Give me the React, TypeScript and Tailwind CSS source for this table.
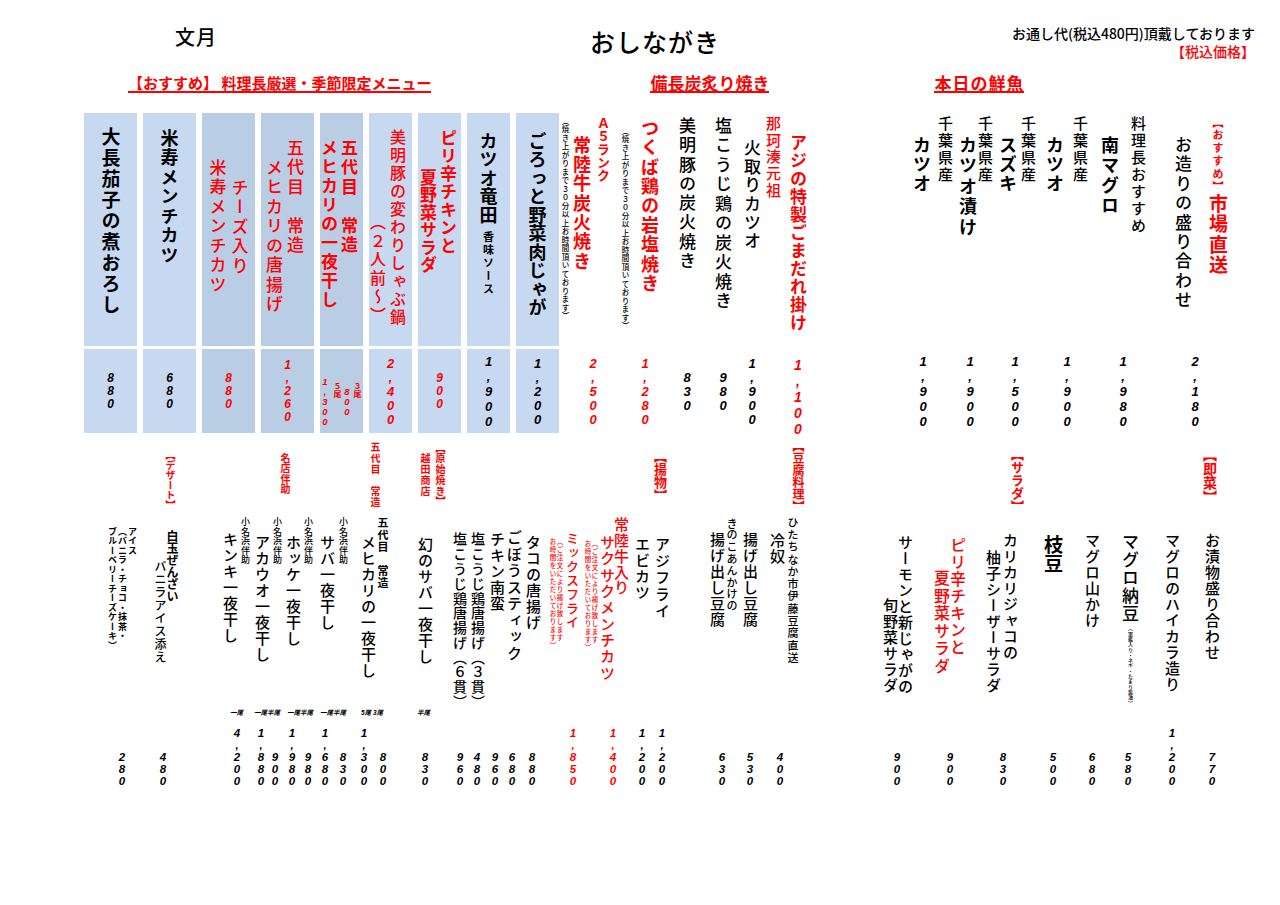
import type { ReactNode } from "react";

const RED = "text-[#ff0000]";
const BOX_LIGHT = "bg-[#c6d9f1]";
const BOX_DARK = "bg-[#b9cde5]";

function VLine({ children, className = "" }: { children: ReactNode; className?: string }) {
  return (
    <div className={`shrink-0 whitespace-nowrap [writing-mode:vertical-rl] ${className}`}>
      {children}
    </div>
  );
}

type PriceProps = {
  v: string;
  red?: boolean;
  cell?: string;
  w?: string;
  size?: string;
  className?: string;
};

// prices are stacked digit by digit, like the printed menu
function Price({ v, red = false, cell = "h-[14px]", w = "w-[14px]", size = "text-[13px]", className = "" }: PriceProps) {
  return (
    <div
      className={`flex shrink-0 flex-col items-center font-['Liberation_Sans',sans-serif] font-bold italic leading-none ${w} ${size} ${
        red ? "text-[#ff0000]" : "text-black"
      } ${className}`}
    >
      {v.split("").map((ch, i) => (
        <span key={i} className={`flex items-center justify-center ${cell}`}>
          {ch}
        </span>
      ))}
    </div>
  );
}

function BoxCol({
  w,
  bg,
  layout = "justify-center",
  price,
  children,
}: {
  w: string;
  bg: string;
  layout?: string;
  price: ReactNode;
  children: ReactNode;
}) {
  return (
    <div className={`flex shrink-0 flex-col gap-[3px] ${w}`}>
      <div className={`flex h-[233px] items-start ${layout} ${bg}`}>{children}</div>
      <div className={`flex h-[84px] items-center justify-center ${bg}`}>{price}</div>
    </div>
  );
}

const small = { cell: "h-[13px]", size: "text-[12px]" };

function TopSection() {
  return (
    <div className="flex h-[320px] items-start">
      {/* recommended boxes */}
      <div className="ml-[84px] flex shrink-0 gap-[6px]">
        <BoxCol w="w-[53px]" bg={BOX_LIGHT} price={<Price v="880" {...small} />}>
          <VLine className="mt-[14px] text-[19px] font-bold leading-[20px] tracking-[2px]">大長茄子の煮おろし</VLine>
        </BoxCol>
        <BoxCol w="w-[53px]" bg={BOX_LIGHT} price={<Price v="680" {...small} />}>
          <VLine className="mt-[16px] text-[18px] font-bold leading-[20px] tracking-[1.5px]">米寿メンチカツ</VLine>
        </BoxCol>
        <BoxCol w="w-[53px]" bg={BOX_DARK} layout="justify-center gap-[6px]" price={<Price v="880" red {...small} />}>
          <VLine className={`mt-[46px] text-[17px] leading-[16px] tracking-[2.5px] ${RED}`}>米寿メンチカツ</VLine>
          <VLine className={`mt-[66px] text-[17px] leading-[16px] tracking-[2.5px] ${RED}`}>チーズ入り</VLine>
        </BoxCol>
        <BoxCol
          w="w-[53px]"
          bg={BOX_DARK}
          layout="justify-start gap-[5px] pl-[5px]"
          price={<Price v="1,260" red {...small} />}
        >
          <VLine className={`mt-[46px] text-[17px] leading-[16px] tracking-[2.5px] ${RED}`}>メヒカリの唐揚げ</VLine>
          <VLine className={`mt-[26px] text-[17px] leading-[16px] tracking-[2.5px] ${RED}`}>五代目　常造</VLine>
        </BoxCol>
        <div className="flex w-[43px] shrink-0 flex-col gap-[3px]">
          <div className={`flex h-[233px] items-start gap-[4px] pl-[1px] ${BOX_DARK}`}>
            <VLine className={`mt-[26px] text-[17px] font-bold leading-[16px] tracking-[2px] ${RED}`}>メヒカリの一夜干し</VLine>
            <VLine className={`mt-[26px] text-[17px] font-bold leading-[16px] tracking-[2.5px] ${RED}`}>五代目　常造</VLine>
          </div>
          <div className={`flex h-[84px] items-start pl-[1px] ${BOX_DARK} ${RED}`}>
            <Price v="1,300" red w="w-[8px]" cell="h-[10px]" size="text-[9.5px]" className="mt-[28px]" />
            <VLine className="ml-[4px] mt-[33px] text-[8px] font-bold leading-[8px]">５尾</VLine>
            <Price v="800" red w="w-[8px]" cell="h-[10px]" size="text-[9.5px]" className="ml-[2px] mt-[38px]" />
            <VLine className="ml-[2px] mt-[33px] text-[8px] font-bold leading-[8px]">３尾</VLine>
          </div>
        </div>
        <BoxCol
          w="w-[43px]"
          bg={BOX_LIGHT}
          layout="justify-start gap-[4px] pl-[1px]"
          price={<Price v="2,400" red />}
        >
          <VLine className={`mt-[101px] text-[16px] leading-[16px] tracking-[2.5px] ${RED}`}>（２人前～）</VLine>
          <VLine className={`mt-[16px] text-[16px] leading-[16px] tracking-[2px] ${RED}`}>美明豚の変わりしゃぶ鍋</VLine>
        </BoxCol>
        <BoxCol
          w="w-[43px]"
          bg={BOX_LIGHT}
          layout="justify-start gap-[4px] pl-[2px]"
          price={<Price v="900" red {...small} />}
        >
          <VLine className={`mt-[56px] text-[17px] font-bold leading-[16px] tracking-[0.5px] ${RED}`}>夏野菜サラダ</VLine>
          <VLine className={`mt-[16px] text-[17px] font-bold leading-[16px] tracking-[1px] ${RED}`}>ピリ辛チキンと</VLine>
        </BoxCol>
        <BoxCol w="w-[43px]" bg={BOX_LIGHT} price={<Price v="1,900" cell="h-[15px]" />}>
          <VLine className="mt-[19px] text-[18px] font-bold leading-[20px] tracking-[0.5px]">
            カツオ竜田
            <span className="ms-[6px] text-[11px] tracking-[2px]">香味ソース</span>
          </VLine>
        </BoxCol>
        <BoxCol w="w-[43px]" bg={BOX_LIGHT} price={<Price v="1,200" />}>
          <VLine className="mt-[19px] text-[18px] font-bold leading-[20px] tracking-[0.5px]">ごろっと野菜肉じゃが</VLine>
        </BoxCol>
      </div>

      {/* charcoal grill and fresh fish */}
      <div className="flex flex-col">
        <div className="flex h-[237px] items-start">
          <VLine className="ml-[2px] mt-[4px] text-[7.5px] leading-[8px] tracking-[1px]">
            （焼き上がりまで３０分以上お時間頂いております）
          </VLine>
          <VLine className={`ml-[5px] mt-[23px] text-[18px] font-bold leading-[16px] tracking-[1.3px] ${RED}`}>常陸牛炭火焼き</VLine>
          <VLine className={`ml-[5px] mt-[4px] text-[13px] font-bold leading-[16px] ${RED}`}>Ａ５ランク</VLine>
          <VLine className="ml-[10px] mt-[14px] text-[7.5px] leading-[8px] tracking-[1px]">
            （焼き上がりまで３０分以上お時間頂いております）
          </VLine>
          <VLine className={`ml-[13px] mt-[6px] text-[18px] font-bold leading-[16px] tracking-[1.4px] ${RED}`}>つくば鶏の岩塩焼き</VLine>
          <VLine className="ml-[21px] mt-[4px] text-[17px] leading-[16px] tracking-[2.3px]">美明豚の炭火焼き</VLine>
          <VLine className="ml-[20px] mt-[4px] text-[17px] leading-[16px] tracking-[2.5px]">塩こうじ鶏の炭火焼き</VLine>
          <VLine className="ml-[13px] mt-[26px] text-[17px] leading-[16px] tracking-[1.7px]">火取りカツオ</VLine>
          <VLine className={`ml-[5px] mt-[3px] text-[15px] leading-[16px] tracking-[1.6px] ${RED}`}>那珂湊元祖</VLine>
          <VLine className={`ml-[9px] mt-[21px] text-[17px] font-bold leading-[16px] tracking-[1px] ${RED}`}>アジの特製ごまだれ掛け</VLine>

          <VLine className="ml-[108px] mt-[23px] text-[18px] font-bold leading-[16px] tracking-[1px]">カツオ</VLine>
          <VLine className="ml-[7px] mt-[3px] text-[15px] leading-[16px] tracking-[2px]">千葉県産</VLine>
          <VLine className="ml-[7px] mt-[23px] text-[18px] font-bold leading-[16px] tracking-[2.5px]">カツオ漬け</VLine>
          <VLine className="ml-[1px] mt-[3px] text-[15px] leading-[16px] tracking-[2px]">千葉県産</VLine>
          <VLine className="ml-[7px] mt-[23px] text-[18px] font-bold leading-[16px] tracking-[1px]">スズキ</VLine>
          <VLine className="ml-[4px] mt-[3px] text-[15px] leading-[16px] tracking-[2px]">千葉県産</VLine>
          <VLine className="ml-[11px] mt-[23px] text-[18px] font-bold leading-[16px] tracking-[1px]">カツオ</VLine>
          <VLine className="ml-[9px] mt-[3px] text-[15px] leading-[16px] tracking-[2px]">千葉県産</VLine>
          <VLine className="ml-[14px] mt-[23px] text-[18px] font-bold leading-[16px] tracking-[2px]">南マグロ</VLine>
          <VLine className="ml-[12px] mt-[3px] text-[15px] leading-[16px] tracking-[2px]">料理長おすすめ</VLine>
          <VLine className="ml-[29px] mt-[23px] text-[17px] leading-[16px] tracking-[2.4px]">お造りの盛り合わせ</VLine>
          <VLine className={`ml-[19px] mt-[4px] text-[19px] font-bold leading-[16px] tracking-[1.5px] ${RED}`}>
            <span className="text-[11px] tracking-[1.8px]">【おすすめ】</span>
            市場直送
          </VLine>
        </div>
        <div className="flex h-[83px] items-center">
          <Price v="2,500" red className="ml-[27px]" />
          <Price v="1,280" red className="ml-[38px]" />
          <Price v="830" className="ml-[28px]" />
          <Price v="980" className="ml-[22px]" />
          <Price v="1,900" className="ml-[15px]" />
          <Price v="1,100" red cell="h-[16px]" size="text-[14px]" className="ml-[32px] mt-[10px]" />
          <Price v="1,900" cell="h-[15px]" className="ml-[111px]" />
          <Price v="1,900" cell="h-[15px]" className="ml-[33px]" />
          <Price v="1,500" cell="h-[15px]" className="ml-[31px]" />
          <Price v="1,900" cell="h-[15px]" className="ml-[38px]" />
          <Price v="1,980" cell="h-[15px]" className="ml-[42px]" />
          <Price v="2,180" cell="h-[15px]" className="ml-[58px]" />
        </div>
      </div>
    </div>
  );
}

function BottomSection() {
  const main = "text-[15px] leading-[16px] tracking-[1px]";
  const maker = "text-[9px] leading-[10px] tracking-[0.6px]";
  const bp = { cell: "h-[12px]", size: "text-[11.5px]" };

  return (
    <div className="flex flex-col">
      {/* category headings */}
      <div className={`flex h-[82px] items-start font-bold leading-[14px] ${RED}`}>
        <VLine className="ml-[163px] mt-[17px] text-[10px]">【デザート】</VLine>
        <VLine className="ml-[101px] mt-[20px] text-[10px] tracking-[0.5px]">名店伴助</VLine>
        <VLine className="ml-[76px] mt-[9px] text-[10px] tracking-[1px]">五代目　常造</VLine>
        <VLine className="ml-[36px] mt-[20px] text-[10px] tracking-[1px]">越田商店</VLine>
        <VLine className="ml-[1px] mt-[10px] text-[10px] tracking-[0.7px]">【原始焼き】</VLine>
        <VLine className="ml-[206px] mt-[17px] text-[13px]">【揚物】</VLine>
        <VLine className="ml-[124px] mt-[7px] text-[12px]">【豆腐料理】</VLine>
        <VLine className="ml-[205px] mt-[15px] text-[13px]">【サラダ】</VLine>
        <VLine className="ml-[179px] mt-[15px] text-[14px]">【即菜】</VLine>
      </div>

      {/* dish names */}
      <div className="flex h-[190px] items-start">
        <VLine className="ml-[107px] mt-[12px] text-[9px] font-bold leading-[10px] tracking-[0.5px]">
          アイス
          <br />
          （バニラ・チョコ・抹茶・
          <br />
          ブルーベリーチーズケーキ）
        </VLine>
        <VLine className="ml-[17px] mt-[45px] text-[12px] leading-[12px] tracking-[1px]">バニラアイス添え</VLine>
        <VLine className="ml-0 mt-[15px] text-[12px] font-bold leading-[12px]">白玉ぜんざい</VLine>

        <VLine className={`ml-[44px] mt-[17px] ${main}`}>キンキ一夜干し</VLine>
        <VLine className={`ml-[2px] mt-[2px] ${maker}`}>小名浜伴助</VLine>
        <VLine className={`ml-[4px] mt-[20px] ${main}`}>アカウオ一夜干し</VLine>
        <VLine className={`ml-[2px] mt-[2px] ${maker}`}>小名浜伴助</VLine>
        <VLine className={`ml-[3px] mt-[20px] ${main}`}>ホッケ一夜干し</VLine>
        <VLine className={`ml-[2px] mt-[2px] ${maker}`}>小名浜伴助</VLine>
        <VLine className={`ml-[6px] mt-[20px] ${main}`}>サバ一夜干し</VLine>
        <VLine className={`ml-[3px] mt-[2px] ${maker}`}>小名浜伴助</VLine>
        <VLine className={`ml-[12px] mt-[20px] ${main}`}>メヒカリの一夜干し</VLine>
        <VLine className="ml-[2px] mt-[2px] text-[11px] font-bold leading-[10px] tracking-[1px]">五代目　常造</VLine>
        <VLine className={`ml-[29px] mt-[22px] ${main}`}>幻のサバ一夜干し</VLine>

        <VLine className="ml-[19px] mt-[17px] text-[14px] leading-[16px] tracking-[0.8px]">塩こうじ鶏唐揚げ（６貫）</VLine>
        <VLine className="ml-[2px] mt-[17px] text-[14px] leading-[16px] tracking-[0.8px]">塩こうじ鶏唐揚げ（３貫）</VLine>
        <VLine className={`ml-[3px] mt-[17px] ${main}`}>チキン南蛮</VLine>
        <VLine className="ml-[1px] mt-[15px] text-[15px] leading-[16px] tracking-[1.5px]">ごぼうスティック</VLine>
        <VLine className={`ml-[3px] mt-[20px] ${main}`}>タコの唐揚げ</VLine>
        <VLine className={`ml-[8px] mt-[23px] text-[6.5px] leading-[7px] tracking-[1.5px] ${RED}`}>
          （ご注文により揚げ致します
          <br />
          お時間をいただいております）
        </VLine>
        <VLine className={`ml-[2px] mt-[17px] text-[13px] leading-[14px] tracking-[1px] ${RED}`}>ミックスフライ</VLine>
        <VLine className={`ml-[5px] mt-[25px] text-[6.5px] leading-[7px] tracking-[1.5px] ${RED}`}>
          （ご注文により揚げ致します
          <br />
          お時間をいただいております）
        </VLine>
        <VLine className={`ml-[2px] mt-[20px] text-[15px] leading-[14px] tracking-[1.3px] ${RED}`}>サクサクメンチカツ</VLine>
        <VLine className={`ml-0 mt-[2px] text-[15px] leading-[14px] tracking-[0.8px] ${RED}`}>常陸牛入り</VLine>
        <VLine className={`ml-[6px] mt-[22px] ${main}`}>エビカツ</VLine>
        <VLine className="ml-[4px] mt-[22px] text-[15px] leading-[16px] tracking-[1.6px]">アジフライ</VLine>

        <VLine className={`ml-[39px] mt-[17px] ${main}`}>揚げ出し豆腐</VLine>
        <VLine className="ml-[1px] mt-[3px] text-[11px] leading-[12px] tracking-[0.8px]">きのこあんかけの</VLine>
        <VLine className={`ml-[4px] mt-[17px] ${main}`}>揚げ出し豆腐</VLine>
        <VLine className={`ml-[11px] mt-[18px] ${main}`}>冷奴</VLine>
        <VLine className="ml-[2px] mt-[2px] text-[11px] leading-[12px] tracking-[1.3px]">ひたちなか市伊藤豆腐直送</VLine>

        <VLine className="ml-[84px] mt-[83px] text-[15px] leading-[14px] tracking-[1px]">旬野菜サラダ</VLine>
        <VLine className="ml-[1px] mt-[20px] text-[15px] leading-[14px] tracking-[1px]">サーモンと新じゃがの</VLine>
        <VLine className={`ml-[22px] mt-[55px] text-[16px] leading-[16px] tracking-[1.5px] ${RED}`}>夏野菜サラダ</VLine>
        <VLine className={`ml-0 mt-[22px] text-[16px] leading-[16px] tracking-[1px] ${RED}`}>ピリ辛チキンと</VLine>
        <VLine className={`ml-[19px] mt-[35px] ${main}`}>柚子シーザーサラダ</VLine>
        <VLine className={`ml-[1px] mt-[18px] ${main}`}>カリカリジャコの</VLine>
        <VLine className="ml-[25px] mt-[20px] text-[19px] font-bold leading-[20px]">枝豆</VLine>
        <VLine className={`ml-[21px] mt-[18px] ${main}`}>マグロ山かけ</VLine>
        <VLine className="ml-[22px] mt-[18px] text-[17px] leading-[16px] tracking-[1px]">
          マグロ納豆
          <span className="ms-[3px] text-[5px] tracking-[0.3px]">（軍艦入り・ネギ・たまり醤油）</span>
        </VLine>
        <VLine className={`ml-[26px] mt-[18px] ${main}`}>マグロのハイカラ造り</VLine>
        <VLine className={`ml-[24px] mt-[18px] ${main}`}>お漬物盛り合わせ</VLine>
      </div>

      {/* portion labels */}
      <div className="flex h-[17px] items-center whitespace-nowrap font-['Liberation_Sans','Noto_Sans_CJK_JP',sans-serif] text-[6.5px] font-bold italic leading-none">
        <span className="ml-[230px] w-[13px] shrink-0">一尾</span>
        <span className="ml-[11px] w-[26px] shrink-0">一尾半尾</span>
        <span className="ml-[7px] w-[26px] shrink-0">一尾半尾</span>
        <span className="ml-[7px] w-[26px] shrink-0">一尾半尾</span>
        <span className="ml-[15px] w-[24px] shrink-0">5尾 3尾</span>
        <span className="ml-[32px] w-[16px] shrink-0">半尾</span>
      </div>

      {/* prices */}
      <div className="flex h-[66px] items-end">
        <Price v="280" {...bp} className="ml-[115px]" />
        <Price v="480" {...bp} className="ml-[27px]" />
        <Price v="4,200" {...bp} className="ml-[60px]" />
        <Price v="1,880" {...bp} className="ml-[10px]" />
        <Price v="900" {...bp} className="ml-0" />
        <Price v="1,980" {...bp} className="ml-[3px]" />
        <Price v="980" {...bp} className="ml-[2px]" />
        <Price v="1,680" {...bp} className="ml-[3px]" />
        <Price v="830" {...bp} className="ml-[4px]" />
        <Price v="1,300" {...bp} className="ml-[7px]" />
        <Price v="800" {...bp} className="ml-[5px]" />
        <Price v="830" {...bp} className="ml-[28px]" />
        <Price v="960" {...bp} className="ml-[21px]" />
        <Price v="480" {...bp} className="ml-[3px]" />
        <Price v="960" {...bp} className="ml-[4px]" />
        <Price v="680" {...bp} className="ml-[3px]" />
        <Price v="880" {...bp} className="ml-[6px]" />
        <Price v="1,850" red {...bp} className="ml-[27px]" />
        <Price v="1,400" red {...bp} className="ml-[26px]" />
        <Price v="1,200" {...bp} className="ml-[15px]" />
        <Price v="1,200" {...bp} className="ml-[6px]" />
        <Price v="630" {...bp} className="ml-[46px]" />
        <Price v="530" {...bp} className="ml-[14px]" />
        <Price v="400" {...bp} className="ml-[16px]" />
        <Price v="900" {...bp} className="ml-[103px]" />
        <Price v="900" {...bp} className="ml-[39px]" />
        <Price v="830" {...bp} className="ml-[39px]" />
        <Price v="500" {...bp} className="ml-[36px]" />
        <Price v="680" {...bp} className="ml-[25px]" />
        <Price v="580" {...bp} className="ml-[22px]" />
        <Price v="1,200" {...bp} className="ml-[30px]" />
        <Price v="770" {...bp} className="ml-[26px]" />
      </div>
    </div>
  );
}

export default function App() {
  return (
    <div className="h-[905px] w-[1280px] overflow-hidden bg-white font-['Noto_Sans_CJK_JP',sans-serif] font-medium text-black">
      <header className="flex h-[70px] items-start pt-[24px]">
        <div className="ml-[175px] mt-[3px] text-[20px] leading-none tracking-[1px]">文月</div>
        <div className="ml-[373px] mt-[5px] text-[25px] leading-none tracking-[1px]">おしながき</div>
        <div className="ml-auto mr-[25px] flex flex-col items-end text-[14px] leading-[18px]">
          <span>お通し代(税込480円)頂戴しております</span>
          <span className={RED}>【税込価格】</span>
        </div>
      </header>

      <div className={`flex h-[43px] items-start pt-[4px] font-bold ${RED}`}>
        <div className="ml-[128px] border-b-2 border-[#ff0000] text-[15px] leading-[17px]">
          【おすすめ】 料理長厳選・季節限定メニュー
        </div>
        <div className="ml-[219px] border-b-2 border-[#ff0000] text-[17px] leading-[17px]">備長炭炙り焼き</div>
        <div className="ml-[165px] border-b-2 border-[#ff0000] text-[17px] leading-[17px] tracking-[1px]">本日の鮮魚</div>
      </div>

      <TopSection />
      <BottomSection />
    </div>
  );
}
